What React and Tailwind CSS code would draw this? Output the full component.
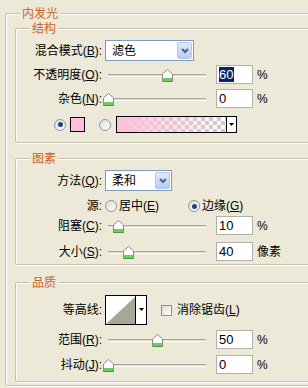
import React from "react";

const GroupBox = ({ title, className = "", children }) => (
  <div
    className={`relative rounded-[2px] border border-[#C5C2B2] shadow-[inset_1px_1px_0_#fff,1px_1px_0_#fff] ${className}`}
  >
    <span className="absolute left-[14px] top-[-8px] bg-[#ECE9D8] px-[2px] text-[12px] leading-[16px] text-[#C8642C]">
      {title}
    </span>
    {children}
  </div>
);

const Label = ({ children }) => (
  <div className="w-[86px] shrink-0 text-right text-[12px] leading-[16px] text-black">
    {children}
  </div>
);

const Key = ({ children }) => <span className="underline">{children}</span>;

const Select = ({ value, width }) => (
  <div className={`ml-[3px] flex h-[21px] items-center border border-[#7F9DB9] bg-white ${width}`}>
    <span className="flex-1 pl-[6px] text-[12px] leading-[16px]">{value}</span>
    <span className="mr-[1px] flex h-[17px] w-[15px] items-center justify-center rounded-[2px] border border-[#B7C8EE] bg-gradient-to-b from-[#E2EAFD] to-[#B8CBF6]">
      <svg width="8" height="6" viewBox="0 0 8 6">
        <path d="M1 1 L4 4 L7 1" stroke="#4D6185" strokeWidth="2" fill="none" />
      </svg>
    </span>
  </div>
);

const Thumb = () => (
  <svg width="11" height="13" viewBox="0 0 11 13">
    <path d="M0.5 12.5 V5 L5.5 0.5 L10.5 5 V12.5 Z" fill="#fff" stroke="#8B8B86" />
    <rect x="1" y="9" width="9" height="3" fill="#72C95E" />
    <path d="M0.5 12.5 H10.5" stroke="#3F9E34" />
  </svg>
);

const Slider = ({ pct }) => (
  <div className="relative ml-[1px] h-[19px] w-[108px] shrink-0">
    <div className="absolute left-[5px] right-[5px] top-[9px] h-[3px] border-t border-b border-t-[#A9A797] border-b-white bg-[#DCD9C9]" />
    <div className="absolute top-[4px]" style={{ left: `${pct * 98}px` }}>
      <Thumb />
    </div>
  </div>
);

const NumBox = ({ children }) => (
  <div className="ml-[5px] flex h-[19px] w-[37px] shrink-0 items-center border border-[#B3B1A6] bg-white pl-[2px] font-['Liberation_Sans',sans-serif] text-[13px] leading-[15px]">
    {children}
  </div>
);

const Unit = ({ children }) => (
  <span className="ml-[4px] text-[12px] leading-[16px]">{children}</span>
);

const Radio = ({ checked }) => (
  <span className="flex h-[12px] w-[12px] shrink-0 items-center justify-center rounded-full border border-[#8E99A6] bg-gradient-to-br from-[#DCDBD3] to-white">
    {checked && <span className="h-[5px] w-[5px] rounded-full bg-[#24417D]" />}
  </span>
);

const SliderRow = ({ label, pct, value, unit, className = "" }) => (
  <div className={`flex h-[19px] items-center ${className}`}>
    <Label>{label}</Label>
    <Slider pct={pct} />
    <NumBox>{value}</NumBox>
    <Unit>{unit}</Unit>
  </div>
);

export default function App() {
  return (
    <div className="h-[388px] w-[308px] overflow-hidden bg-[#ECE9D8] pl-[5px] pt-[13px] font-['Liberation_Sans','Noto_Sans_CJK_SC',sans-serif] text-black">
      <GroupBox title="内发光" className="w-[330px] px-[9px] pb-[3px]">
        {/* 结构 */}
        <GroupBox title="结构" className="mt-[14px] pt-[11px] pb-[9px]">
          <div className="flex h-[21px] items-center">
            <Label>
              混合模式(<Key>B</Key>):
            </Label>
            <Select value="滤色" width="w-[89px]" />
          </div>
          <SliderRow
            className="mt-[4px]"
            label={<>不透明度(<Key>O</Key>):</>}
            pct={0.6}
            value={<span className="bg-[#0A246A] pr-[1px] text-white">60</span>}
            unit="%"
          />
          <SliderRow
            className="mt-[5px]"
            label={<>杂色(<Key>N</Key>):</>}
            pct={0}
            value="0"
            unit="%"
          />
          <div className="mt-[8px] flex h-[17px] items-center pl-[38px]">
            <Radio checked />
            <span className="ml-[4px] h-[15px] w-[15px] border border-black bg-[#FFBFDB]" />
            <span className="ml-[14px]">
              <Radio />
            </span>
            <div className="ml-[5px] flex h-[17px] w-[121px] border border-black">
              <div className="flex-1 bg-[linear-gradient(to_right,#FFBFDB,#FFBFDB00),repeating-conic-gradient(#CCCCCC_0_25%,#FFFFFF_0_50%)] bg-[length:100%_100%,8px_8px]" />
              <div className="flex w-[10px] items-center justify-center border-l border-black bg-white">
                <svg width="5" height="3" viewBox="0 0 5 3">
                  <path d="M0 0 H5 L2.5 3 Z" fill="#000" />
                </svg>
              </div>
            </div>
          </div>
        </GroupBox>

        {/* 图素 */}
        <GroupBox title="图素" className="mt-[15px] pt-[11px] pb-[3px]">
          <div className="flex h-[21px] items-center">
            <Label>
              方法(<Key>Q</Key>):
            </Label>
            <Select value="柔和" width="w-[67px]" />
          </div>
          <div className="mt-[6px] flex h-[18px] items-center">
            <Label>源:</Label>
            <div className="ml-[3px] flex w-[83px] items-center">
              <Radio />
              <span className="ml-[2px] text-[12px] leading-[16px]">
                居中(<Key>E</Key>)
              </span>
            </div>
            <Radio checked />
            <span className="ml-[2px] text-[12px] leading-[16px]">
              边缘(<Key>G</Key>)
            </span>
          </div>
          <SliderRow
            className="mt-[1px]"
            label={<>阻塞(<Key>C</Key>):</>}
            pct={0.1}
            value="10"
            unit="%"
          />
          <SliderRow
            className="mt-[7px]"
            label={<>大小(<Key>S</Key>):</>}
            pct={0.2}
            value="40"
            unit="像素"
          />
        </GroupBox>

        {/* 品质 */}
        <GroupBox title="品质" className="mt-[17px] pt-[12px] pb-[7px]">
          <div className="flex h-[30px] items-center">
            <Label>等高线:</Label>
            <div className="ml-[3px] flex h-[30px] w-[42px] border border-black bg-white">
              <svg width="29" height="28" viewBox="0 0 29 28">
                <path d="M1 27 L29 1 V28 H1 Z" fill="#A9A698" />
              </svg>
              <div className="flex w-[11px] items-center justify-center border-l border-black pb-[2px]">
                <svg width="5" height="3" viewBox="0 0 5 3">
                  <path d="M0 0 H5 L2.5 3 Z" fill="#000" />
                </svg>
              </div>
            </div>
            <span className="ml-[14px] h-[11px] w-[11px] border border-[#8F8F8F] bg-gradient-to-br from-[#DCDCD5] to-white" />
            <span className="ml-[5px] text-[12px] leading-[16px]">
              消除锯齿(<Key>L</Key>)
            </span>
          </div>
          <SliderRow
            className="mt-[5px]"
            label={<>范围(<Key>R</Key>):</>}
            pct={0.5}
            value="50"
            unit="%"
          />
          <SliderRow
            className="mt-[6px]"
            label={<>抖动(<Key>J</Key>):</>}
            pct={0}
            value="0"
            unit="%"
          />
        </GroupBox>
      </GroupBox>
    </div>
  );
}
